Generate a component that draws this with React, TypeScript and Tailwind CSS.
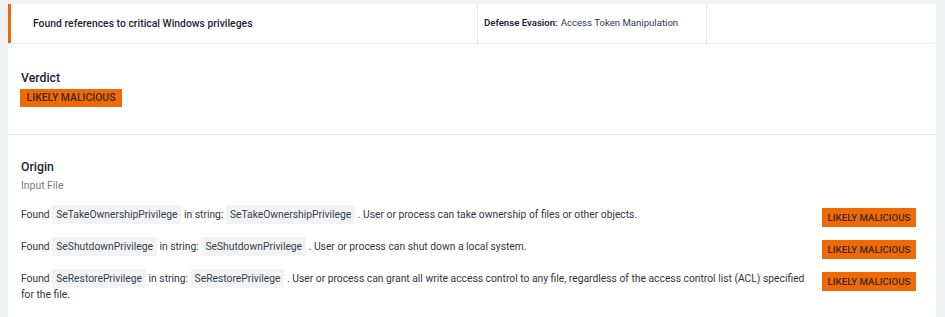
import React from "react";

const Chip = ({ children }: { children: React.ReactNode }) => (
  <span className="bg-[#f2f3f5] px-[4px] py-[3px] text-[#3a3f47]">{children}</span>
);

const Badge = ({ small }: { small?: boolean }) => (
  <span
    className={
      small
        ? "flex h-[19px] w-[94px] items-center justify-center whitespace-nowrap bg-[#ef6a05] text-[9.7px] font-medium leading-none text-[#3b2a22]"
        : "flex h-[18px] w-[102px] items-center justify-center whitespace-nowrap bg-[#ef6a05] text-[10.4px] font-medium leading-none text-[#3b2a22]"
    }
  >
    LIKELY MALICIOUS
  </span>
);

const rows = [
  {
    name: "SeTakeOwnershipPrivilege",
    desc: "User or process can take ownership of files or other objects.",
  },
  {
    name: "SeShutdownPrivilege",
    desc: "User or process can shut down a local system.",
  },
  {
    name: "SeRestorePrivilege",
    desc: "User or process can grant all write access control to any file, regardless of the access control list (ACL) specified for the file.",
  },
];

export default function App() {
  return (
    <div
      className="h-[317px] w-[945px] overflow-hidden bg-[#f1f2f5] pl-[8px] pr-[9px] pt-[4px]"
      style={{ fontFamily: "Roboto, 'Liberation Sans', sans-serif" }}
    >
      <div className="h-[400px] bg-white">
        {/* header row */}
        <div className="flex h-[40px] border-b border-[#e6e7ea]">
          <div className="flex w-[470px] shrink-0 items-center whitespace-nowrap border-l-[3px] border-r border-[#ef6a05] border-r-[#e6e7ea] pl-[22px] text-[10.4px] font-medium text-[#1f2633]">
            Found references to critical Windows privileges
          </div>
          <div className="flex w-[229px] shrink-0 items-center whitespace-nowrap border-r border-[#e6e7ea] pl-[6px] text-[9.6px] text-[#2d3a52]">
            <span className="font-semibold text-[#1f2633]">Defense Evasion:</span>
            <span className="ml-[3px]">Access Token Manipulation</span>
          </div>
          <div className="flex-1" />
        </div>

        {/* Verdict */}
        <div className="border-b border-[#e6e7ea] pb-[27px] pl-[12px] pt-[24px]">
          <div className="pl-px text-[12.3px] font-medium leading-[20px] text-[#1f2633]">Verdict</div>
          <div className="mt-px flex">
            <Badge />
          </div>
        </div>

        {/* Origin */}
        <div className="pl-[12px] pr-[20px] pt-[22px]">
          <div className="pl-px text-[12.3px] font-medium leading-[20px] text-[#1f2633]">Origin</div>
          <div className="mt-px pl-px text-[10.4px] leading-[16px] text-[#757b85]">Input File</div>
          <div className="mt-[13px] flex flex-col gap-[12px]">
            {rows.map((r) => (
              <div key={r.name} className="flex items-start justify-between">
                <div className="w-[792px] pl-px text-[10.3px] leading-[16px] text-[#33373d]">
                  Found <Chip>{r.name}</Chip> in string: <Chip>{r.name}</Chip> . {r.desc}
                </div>
                <div className="mt-px flex">
                  <Badge small />
                </div>
              </div>
            ))}
          </div>
        </div>
      </div>
    </div>
  );
}
